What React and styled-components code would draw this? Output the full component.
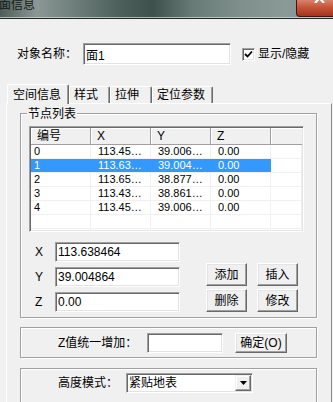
import React from "react";
import styled, { createGlobalStyle } from "styled-components";

const FONT = `"Liberation Sans", "Noto Sans CJK SC", sans-serif`;

const GlobalStyle = createGlobalStyle`
  html, body {
    margin: 0;
    padding: 0;
    background: #f0f0f0;
  }
  body {
    font-family: ${FONT};
    font-size: 12px;
    color: #000;
  }
`;

const Window = styled.div`
  width: 333px;
  height: 402px;
  overflow: hidden;
  background: #f0f0f0;
  display: flex;
  flex-direction: column;
`;

const TitleBar = styled.div`
  flex: none;
  height: 18px;
  display: flex;
  align-items: flex-start;
  overflow: hidden;
  background: linear-gradient(
    90deg,
    #4e5d59 0%,
    #8b9794 11%,
    #6f807c 22%,
    #4c5f5a 36%,
    #3e514c 46%,
    #687b77 58%,
    #7f908c 72%,
    #8a9b97 86%,
    #7a8b88 100%
  );
  box-shadow: inset 0 -1px 0 rgba(214, 222, 220, 0.7);
  border-bottom: 1px solid #1f2826;
`;

const Title = styled.span`
  font: 12px/12px "Noto Sans CJK SC", sans-serif;
  margin: -2px 0 0 -1px;
  color: #141a19;
`;

const CloseButton = styled.div`
  margin-left: auto;
  margin-right: -12px;
  width: 49px;
  height: 17px;
  box-sizing: border-box;
  border: 1px solid #3d1811;
  border-top: none;
  border-bottom-left-radius: 4px;
  background: linear-gradient(#d9846d, #c5553a 45%, #a8321c);
  display: flex;
  justify-content: center;
  padding-right: 2px;
  svg {
    margin-top: -7px;
  }
`;

const Body = styled.div`
  flex: 1;
  display: flex;
  flex-direction: column;
  padding-top: 24px;
`;

const NameRow = styled.div`
  display: flex;
  align-items: center;
  height: 22px;
  padding-left: 17px;
`;

const Label = styled.span`
  flex: none;
  width: ${({ $w }) => $w || "auto"};
  font-size: 12px;
  line-height: 14px;
  white-space: nowrap;
`;

const Field = styled.input`
  box-sizing: border-box;
  flex: none;
  width: ${({ $w }) => $w}px;
  height: ${({ $h }) => $h || 20}px;
  margin: 0;
  padding: 0 0 0 2px;
  border: 1px solid;
  border-color: #a0a0a0 #fff #fff #a0a0a0;
  box-shadow: inset 1px 1px 0 #696969, inset -1px -1px 0 #e3e3e3;
  background: #fff;
  font: 12px/14px ${FONT};
  color: #000;
  outline: none;
`;

const CheckBox = styled.span`
  box-sizing: border-box;
  flex: none;
  width: 13px;
  height: 13px;
  margin: 0 3px 0 11px;
  border: 1px solid;
  border-color: #a0a0a0 #fff #fff #a0a0a0;
  box-shadow: inset 1px 1px 0 #696969, inset -1px -1px 0 #e3e3e3;
  background: #fff;
  display: flex;
  align-items: center;
  justify-content: center;
`;

const TabStrip = styled.div`
  display: flex;
  align-items: flex-end;
  height: 19px;
  margin-top: 19px;
  padding-left: 7px;
  position: relative;
  z-index: 2;
`;

const Tab = styled.div`
  box-sizing: border-box;
  flex: none;
  width: ${({ $w }) => $w}px;
  height: ${({ $active }) => ($active ? 20 : 17)}px;
  margin-bottom: ${({ $active }) => ($active ? -1 : 0)}px;
  padding-left: ${({ $active }) => ($active ? 5 : 4)}px;
  background: #f0f0f0;
  border-top: 1px solid #fff;
  border-left: 1px solid #fff;
  border-right: 1px solid #696969;
  box-shadow: inset -1px 0 0 #a0a0a0;
  border-radius: 2px 2px 0 0;
  display: flex;
  align-items: center;
  font-size: 12px;
  line-height: 14px;
  white-space: nowrap;
  position: relative;
  z-index: ${({ $active }) => ($active ? 2 : 1)};
`;

const Pane = styled.div`
  flex: 1;
  box-sizing: border-box;
  width: 326px;
  margin-left: 6px;
  border-top: 1px solid #fff;
  border-left: 1px solid #fff;
  border-right: 1px solid #8c8c8c;
  padding: 9px 0 0 13px;
  display: flex;
  flex-direction: column;
`;

const Group = styled.div`
  position: relative;
  flex: none;
  box-sizing: border-box;
  width: 297px;
  height: ${({ $h }) => $h}px;
  margin-top: ${({ $mt }) => $mt || 0}px;
  border: 1px solid #a0a0a0;
  box-shadow: 1px 1px 0 #fff, inset 1px 1px 0 #fff;
  display: flex;
  flex-direction: ${({ $row }) => ($row ? "row" : "column")};
  align-items: ${({ $align }) => $align || "stretch"};
  padding: ${({ $pad }) => $pad};
`;

const Legend = styled.span`
  position: absolute;
  top: -7px;
  left: 6px;
  padding: 0 1px;
  background: #f0f0f0;
  font-size: 12px;
  line-height: 14px;
`;

const ListView = styled.div`
  box-sizing: border-box;
  width: 275px;
  height: 106px;
  border: 1px solid;
  border-color: #a0a0a0 #fff #fff #a0a0a0;
  box-shadow: inset 1px 1px 0 #696969, inset -1px -1px 0 #e3e3e3;
  padding: 1px;
  background: #fff;
  overflow: hidden;
`;

const HeaderRow = styled.div`
  display: flex;
  height: 17px;
  box-sizing: border-box;
  background: #f0f0f0;
  border-bottom: 1px solid #a0a0a0;
`;

const HeaderCell = styled.div`
  box-sizing: border-box;
  flex: ${({ $fill }) => ($fill ? 1 : "none")};
  width: 60px;
  padding-left: 6px;
  border-right: ${({ $fill }) => ($fill ? "none" : "1px solid #a0a0a0")};
  box-shadow: inset 1px 1px 0 #fff;
  display: flex;
  align-items: center;
  font-size: 12px;
  line-height: 14px;
`;

const Row = styled.div`
  display: flex;
  height: 14px;
  box-sizing: border-box;
  border-bottom: 1px solid #f0f0f0;
`;

const Cell = styled.div`
  box-sizing: border-box;
  flex: ${({ $fill }) => ($fill ? 1 : "none")};
  width: 60px;
  padding-left: ${({ $first }) => ($first ? 3 : 7)}px;
  border-right: 1px solid ${({ $sel }) => ($sel ? "#3399ff" : "#f0f0f0")};
  background: ${({ $sel }) => ($sel ? "#3399ff" : "transparent")};
  color: ${({ $sel }) => ($sel ? "#fff" : "#000")};
  font: 11px/13px ${FONT};
  white-space: nowrap;
  overflow: hidden;
`;

const EditArea = styled.div`
  display: flex;
  align-items: flex-end;
  margin-top: 10px;
`;

const CoordList = styled.div`
  display: flex;
  flex-direction: column;
  gap: 5px;
`;

const CoordRow = styled.div`
  display: flex;
  align-items: center;
`;

const CoordLabel = styled.span`
  width: 26px;
  box-sizing: border-box;
  padding-left: 6px;
  font: 12px/14px ${FONT};
`;

const ButtonGrid = styled.div`
  display: grid;
  grid-template-columns: 41px 41px;
  column-gap: 10px;
  row-gap: 3px;
  margin-left: 26px;
`;

const Button = styled.button`
  box-sizing: border-box;
  width: ${({ $w }) => $w || 41}px;
  height: ${({ $h }) => $h || 23}px;
  margin: 0;
  padding: 0;
  border: 1px solid;
  border-color: #fff #696969 #696969 #fff;
  box-shadow: inset -1px -1px 0 #a0a0a0, inset 1px 1px 0 #e3e3e3;
  background: #f0f0f0;
  font: 12px/14px ${FONT};
  color: #000;
  display: flex;
  align-items: center;
  justify-content: center;
`;

const ComboBox = styled.div`
  box-sizing: border-box;
  width: 127px;
  height: 20px;
  border: 1px solid;
  border-color: #a0a0a0 #fff #fff #a0a0a0;
  box-shadow: inset 1px 1px 0 #696969, inset -1px -1px 0 #e3e3e3;
  background: #fff;
  display: flex;
  align-items: center;
  padding: 0 1px 0 2px;
  font: 12px/14px ${FONT};
`;

const ComboText = styled.span`
  flex: 1;
`;

const DropButton = styled.span`
  box-sizing: border-box;
  width: 16px;
  height: 16px;
  border: 1px solid;
  border-color: #f0f0f0 #696969 #696969 #f0f0f0;
  box-shadow: inset -1px -1px 0 #a0a0a0, inset 1px 1px 0 #fff;
  background: #f0f0f0;
  display: flex;
  align-items: center;
  justify-content: center;
`;

const rows = [
  ["0", "113.45…", "39.006…", "0.00"],
  ["1", "113.63…", "39.004…", "0.00"],
  ["2", "113.65…", "38.877…", "0.00"],
  ["3", "113.43…", "38.861…", "0.00"],
  ["4", "113.45…", "39.006…", "0.00"],
  ["", "", "", ""],
  ["", "", "", ""],
];

export default function App() {
  return (
    <>
      <GlobalStyle />
      <Window>
        <TitleBar>
          <Title>面信息</Title>
          <CloseButton>
            <svg width="11" height="10" viewBox="0 0 11 10">
              <path d="M1 0 L10 10 M10 0 L1 10" stroke="#fff" strokeWidth="2.2" />
            </svg>
          </CloseButton>
        </TitleBar>
        <Body>
          <NameRow>
            <Label $w="66px">对象名称：</Label>
            <Field $w={148} $h={22} value="面1" readOnly />
            <CheckBox>
              <svg width="9" height="9" viewBox="0 0 9 9">
                <path d="M1 4 L3.5 6.5 L8 1.5" fill="none" stroke="#000" strokeWidth="1.8" />
              </svg>
            </CheckBox>
            <Label>显示/隐藏</Label>
          </NameRow>

          <TabStrip>
            <Tab $active $w={62}>空间信息</Tab>
            <Tab $w={41}>样式</Tab>
            <Tab $w={42}>拉伸</Tab>
            <Tab $w={61}>定位参数</Tab>
          </TabStrip>

          <Pane>
            <Group $h={205} $pad="12px 0 0 8px">
              <Legend>节点列表</Legend>
              <ListView>
                <HeaderRow>
                  <HeaderCell>编号</HeaderCell>
                  <HeaderCell>X</HeaderCell>
                  <HeaderCell>Y</HeaderCell>
                  <HeaderCell>Z</HeaderCell>
                  <HeaderCell $fill />
                </HeaderRow>
                {rows.map((r, i) => (
                  <Row key={i}>
                    {r.map((v, j) => (
                      <Cell key={j} $first={j === 0} $sel={i === 1}>
                        {v}
                      </Cell>
                    ))}
                    <Cell $fill />
                  </Row>
                ))}
              </ListView>

              <EditArea>
                <CoordList>
                  <CoordRow>
                    <CoordLabel>X</CoordLabel>
                    <Field $w={125} value="113.638464" readOnly />
                  </CoordRow>
                  <CoordRow>
                    <CoordLabel>Y</CoordLabel>
                    <Field $w={125} value="39.004864" readOnly />
                  </CoordRow>
                  <CoordRow>
                    <CoordLabel>Z</CoordLabel>
                    <Field $w={125} value="0.00" readOnly />
                  </CoordRow>
                </CoordList>
                <ButtonGrid>
                  <Button>添加</Button>
                  <Button>插入</Button>
                  <Button>删除</Button>
                  <Button>修改</Button>
                </ButtonGrid>
              </EditArea>
            </Group>

            <Group $mt={9} $h={31} $row $align="center" $pad="0 0 0 37px">
              <Label $w="89px">Z值统一增加：</Label>
              <Field $w={76} readOnly />
              <Button $w={52} $h={20} style={{ marginLeft: 12 }}>
                确定(O)
              </Button>
            </Group>

            <Group $mt={10} $h={40} $row $align="flex-start" $pad="4px 0 0 37px">
              <Label $w="68px" style={{ paddingTop: 3 }}>
                高度模式：
              </Label>
              <ComboBox>
                <ComboText>紧贴地表</ComboText>
                <DropButton>
                  <svg width="7" height="4" viewBox="0 0 7 4">
                    <path d="M0 0 H7 L3.5 4 Z" fill="#000" />
                  </svg>
                </DropButton>
              </ComboBox>
            </Group>
          </Pane>
        </Body>
      </Window>
    </>
  );
}
